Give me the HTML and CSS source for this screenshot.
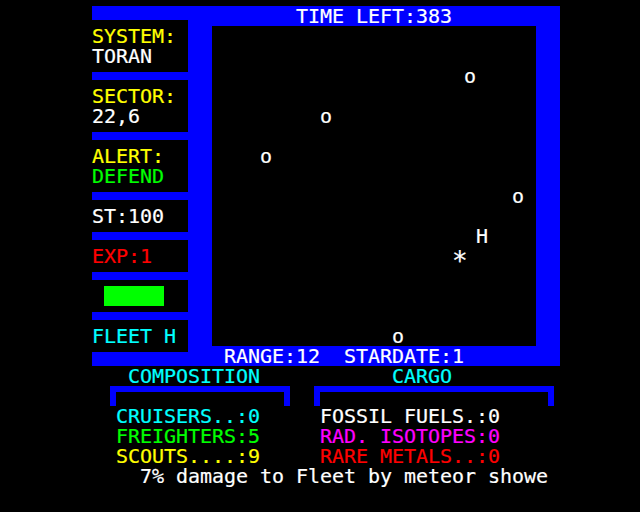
FILE: index.html
```html
<!DOCTYPE html>
<html lang="en">
<head>
<meta charset="utf-8">
<title>Fleet Status</title>
<link rel="stylesheet" href="styles.css">
</head>
<body>
<div class="screen">
  <div class="blue top-left"></div>
  <div class="blue title-bar"></div>
  <div class="blue vbar-left"></div>
  <div class="blue vbar-right"></div>
  <div class="blue bottom-bar"></div>
  <div class="blue bottom-left"></div>
  <div class="blue sep sep-1"></div>
  <div class="blue sep sep-2"></div>
  <div class="blue sep sep-3"></div>
  <div class="blue sep sep-4"></div>
  <div class="blue sep sep-5"></div>
  <div class="blue sep sep-6"></div>
  <div class="health"></div>
  <div class="blue bracket-comp"></div>
  <div class="blue bracket-v comp-l"></div>
  <div class="blue bracket-v comp-r"></div>
  <div class="blue bracket-cargo"></div>
  <div class="blue bracket-v cargo-l"></div>
  <div class="blue bracket-v cargo-r"></div>

  <div class="txt title">TIME LEFT:383</div>

  <div class="txt yellow lbl-system">SYSTEM:</div>
  <div class="txt val-system">TORAN</div>
  <div class="txt yellow lbl-sector">SECTOR:</div>
  <div class="txt val-sector">22,6</div>
  <div class="txt yellow lbl-alert">ALERT:</div>
  <div class="txt green val-alert">DEFEND</div>
  <div class="txt stat-st">ST:100</div>
  <div class="txt red stat-exp">EXP:1</div>
  <div class="txt cyan fleet">FLEET H</div>

  <div class="txt obj o1">o</div>
  <div class="txt obj o2">o</div>
  <div class="txt obj o3">o</div>
  <div class="txt obj o4">o</div>
  <div class="txt obj o5">o</div>
  <div class="txt obj fleet-h">H</div>
  <div class="txt obj ship"><span class="aster">*</span></div>

  <div class="txt status-line">RANGE:12  STARDATE:1</div>

  <div class="txt cyan head-comp">COMPOSITION</div>
  <div class="txt cyan head-cargo">CARGO</div>

  <div class="list comp-list">
    <div class="txt cyan">CRUISERS..:0</div>
    <div class="txt green">FREIGHTERS:5</div>
    <div class="txt yellow">SCOUTS....:9</div>
  </div>
  <div class="list cargo-list">
    <div class="txt">FOSSIL FUELS.:0</div>
    <div class="txt magenta">RAD. ISOTOPES:0</div>
    <div class="txt red">RARE METALS..:0</div>
  </div>

  <div class="txt message">7% damage to Fleet by meteor showe</div>
</div>
</body>
</html>
```

FILE: styles.css
```css
html, body {
  margin: 0;
  padding: 0;
  background: #000;
}

body {
  width: 640px;
  height: 512px;
  overflow: hidden;
}

.screen {
  display: grid;
  grid-template-columns: repeat(80, 6px);
  grid-template-rows: repeat(25, 6px 8px 6px);
  padding: 6px 0 0 80px;
  font-family: "DejaVu Sans Mono", "Liberation Mono", monospace;
  font-size: 20px;
  line-height: 20px;
  letter-spacing: -0.04px;
  color: #fff;
  -webkit-text-stroke: 0.2px currentColor;
}

.blue { background: #0000ff; }

.txt {
  white-space: pre;
  height: 20px;
}

.list {
  display: flex;
  flex-direction: column;
}

.yellow { color: #ffff00; }
.green { color: #00ff00; }
.cyan { color: #00ffff; }
.red { color: #ff0000; }
.magenta { color: #ff00ff; }

/* frame */
.top-left { grid-column: 3 / 23; grid-row: 1 / 3; }
.title-bar { grid-column: 23 / 81; grid-row: 1 / 4; }
.vbar-left { grid-column: 19 / 23; grid-row: 1 / 55; }
.vbar-right { grid-column: 77 / 81; grid-row: 1 / 55; }
.bottom-bar { grid-column: 23 / 77; grid-row: 52 / 55; }
.bottom-left { grid-column: 3 / 19; grid-row: 53 / 55; }

.sep { grid-column: 3 / 19; }
.sep-1 { grid-row: 11 / 12; }
.sep-2 { grid-row: 20 / 21; }
.sep-3 { grid-row: 29 / 30; }
.sep-4 { grid-row: 35 / 36; }
.sep-5 { grid-row: 41 / 42; }
.sep-6 { grid-row: 47 / 48; }

.health {
  grid-column: 5 / 15;
  grid-row: 43 / 46;
  background: #00ff00;
}

.bracket-comp { grid-column: 6 / 36; grid-row: 58 / 59; }
.bracket-cargo { grid-column: 40 / 80; grid-row: 58 / 59; }
.bracket-v { grid-row: 58 / 61; }
.comp-l { grid-column: 6 / 7; }
.comp-r { grid-column: 35 / 36; }
.cargo-l { grid-column: 40 / 41; }
.cargo-r { grid-column: 79 / 80; }

/* texts */
.title { grid-column: 37 / span 26; grid-row: 1 / 4; }

.lbl-system, .val-system, .lbl-sector, .val-sector,
.lbl-alert, .val-alert, .stat-st, .stat-exp, .fleet {
  grid-column: 3 / span 16;
}
.lbl-system { grid-row: 4 / 7; }
.val-system { grid-row: 7 / 10; }
.lbl-sector { grid-row: 13 / 16; }
.val-sector { grid-row: 16 / 19; }
.lbl-alert { grid-row: 22 / 25; }
.val-alert { grid-row: 25 / 28; }
.stat-st { grid-row: 31 / 34; }
.stat-exp { grid-row: 37 / 40; }
.fleet { grid-row: 49 / 52; }

/* map objects */
.obj { grid-column-end: span 2; }
.o1 { grid-column-start: 65; grid-row: 10 / 13; }
.o2 { grid-column-start: 41; grid-row: 16 / 19; }
.o3 { grid-column-start: 31; grid-row: 22 / 25; }
.o4 { grid-column-start: 73; grid-row: 28 / 31; }
.o5 { grid-column-start: 53; grid-row: 49 / 52; }
.fleet-h { grid-column-start: 67; grid-row: 34 / 37; }
.ship { grid-column-start: 63; grid-row: 37 / 40; }
.aster {
  font-size: 26px;
  line-height: 20px;
  display: inline-block;
  transform: translateY(5px);
}

.status-line { grid-column: 25 / span 40; grid-row: 52 / 55; }
.head-comp { grid-column: 9 / span 22; grid-row: 55 / 58; }
.head-cargo { grid-column: 53 / span 10; grid-row: 55 / 58; }

.comp-list { grid-column: 7 / span 24; grid-row: 61 / 70; }
.cargo-list { grid-column: 41 / span 30; grid-row: 61 / 70; }

.message { grid-column: 11 / span 68; grid-row: 70 / 73; }
```
